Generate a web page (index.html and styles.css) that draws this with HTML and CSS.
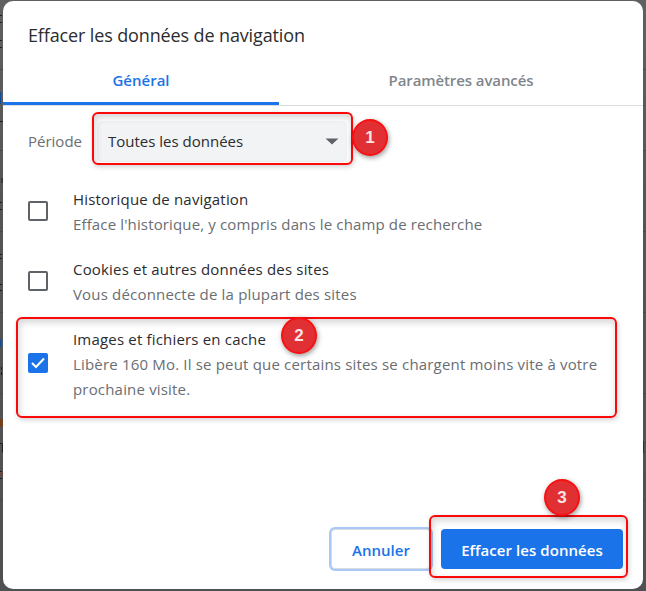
FILE: index.html
```html
<!DOCTYPE html>
<html lang="fr">
<head>
<meta charset="utf-8">
<title>Effacer les données de navigation</title>
<link rel="stylesheet" href="styles.css">
</head>
<body>
<svg class="backdrop" width="646" height="591" viewBox="0 0 646 591" aria-hidden="true">
  <path d="M0 69.500h3M0 150.500h3M0 231.500h646M0 312.500h3M0 393.500h646M643 69.500h3M643 150.500h3M643 312.500h3M0 500.500h646" stroke="#47484a"/>
  <path d="M0 15.500h2M0 22.500h2M0 40.500h2M0 47.500h2M0 121.500h3M2 178v5M0 202.500h2M0 209.500h2M0 254.500h2M0 258.500h2M0 284.500h2M0 290.500h2M1.500 367v3M1.500 372v3M0 443.500h2.500v9M0 471.500h2M0 478.500h2" fill="none" stroke="#1f2023"/>
  <path d="M0 92h1v12H0zM0 339h1v8H0z" fill="#164a91"/>
  <path d="M0 419h1v8H0zM2 419h1v8H2zM2 472h1v4H2z" fill="#713c1c"/>
  <path d="M643 441h1v12h-1z" fill="#26304d"/>
</svg>
<main class="dialog">
  <h1 class="title"><span>Effacer les données de navigation</span></h1>
  <nav class="tabs">
    <div class="tab active"><span>Général</span></div>
    <div class="tab advanced"><span>Paramètres avancés</span></div>
  </nav>
  <div class="period">
    <span class="period-label">Période</span>
    <div class="select"><span>Toutes les données</span>
      <svg width="14" height="7" viewBox="0 0 14 7"><path d="M.5.5h13L7 6.500z" fill="#5f6368"/></svg>
    </div>
  </div>
  <div class="option">
    <span class="box"></span>
    <div class="text"><p class="name">Historique de navigation</p><p class="desc short">Efface l'historique, y compris dans le champ de recherche</p></div>
  </div>
  <div class="option">
    <span class="box"></span>
    <div class="text"><p class="name">Cookies et autres données des sites</p><p class="desc">Vous déconnecte de la plupart des sites</p></div>
  </div>
  <div class="option tall">
    <span class="box checked"><svg width="20" height="20" viewBox="0 0 20 20"><path d="M4 10l4 4 8-8.500" fill="none" stroke="#fff" stroke-width="2"/></svg></span>
    <div class="text"><p class="name">Images et fichiers en cache</p><p class="desc">Libère 160 Mo. Il se peut que certains sites se chargent moins vite à votre</p><p class="desc">prochaine visite.</p></div>
  </div>
  <footer class="actions">
    <button class="cancel"><span>Annuler</span></button>
    <button class="confirm"><span>Effacer les données</span></button>
  </footer>
</main>
<div class="mark mark-1"></div>
<div class="mark mark-2"></div>
<div class="mark mark-3"></div>
<div class="badge badge-1">1</div>
<div class="badge badge-2">2</div>
<div class="badge badge-3">3</div>
</body>
</html>
```
FILE: styles.css
```css
* { box-sizing: border-box; }
body {
  margin: 0;
  width: 646px;
  height: 591px;
  padding: 1px 3px 2px;
  overflow: hidden;
  position: relative;
  background: linear-gradient(#606060, #545557 35%, #4f5052);
  font-family: "Open Sans", "Noto Sans", sans-serif;
  font-size: 15px;
  color: #2b2c2f;
}
span, p { white-space: nowrap; }
.backdrop { position: absolute; left: 0; top: 0; }
.dialog {
  position: relative;
  width: 640px;
  height: 588px;
  border-radius: 10px;
  background: #fff;
  display: flex;
  flex-direction: column;
}
.title {
  margin: 0;
  padding: 19px 25px 0;
  height: 55px;
  font-size: 18px;
  line-height: 30px;
  font-weight: 400;
  letter-spacing: -.13px;
}
.tabs {
  display: grid;
  grid-template-columns: 276px 1fr;
  height: 50px;
  border-bottom: 1px solid #dadce0;
}
.tab {
  display: flex;
  justify-content: center;
  height: 49px;
  line-height: 20px;
  padding-top: 14px;
  font-weight: 600;
  color: #80868b;
}
.tab.advanced { letter-spacing: -.1px; }
.tab.active {
  color: #1a73e8;
  border-bottom: 3px solid #1a73e8;
  border-top-right-radius: 2px;
}
.period {
  display: flex;
  align-items: center;
  height: 50px;
  margin-top: 10px;
  padding-left: 25px;
}
.period-label { color: #6a6e72; width: 69px; }
.select {
  display: flex;
  align-items: center;
  justify-content: space-between;
  width: 250px;
  height: 41px;
  padding: 0 8px 0 11px;
  border-radius: 5px;
  background: #f1f3f4;
}
.option {
  display: flex;
  align-items: center;
  gap: 25px;
  height: 70px;
  padding-left: 25px;
}
.period + .option { margin-top: 10px; }
.option.tall { height: 95px; margin-top: -1px; }
.option p { margin: 0; line-height: 25px; letter-spacing: .18px; }
.option .short { letter-spacing: .14px; }
.text { padding-top: 2px; }
.tall .text { padding-top: 4px; }
.box {
  width: 20px;
  height: 20px;
  flex: none;
  border: 2px solid #5f6368;
  border-radius: 2px;
}
.box.checked { border: 0; background: #1a73e8; }
.box svg { display: block; }
.desc { color: #6a6e72; }
.actions {
  display: flex;
  justify-content: flex-end;
  gap: 10px;
  margin-top: auto;
  padding: 0 20px 20px 0;
}
button {
  height: 40px;
  padding: 2px 0 0;
  border: 0;
  border-radius: 4px;
  font: 600 15px "Open Sans", "Noto Sans", sans-serif;
}
.cancel {
  width: 100px;
  background: #fff;
  color: #1a73e8;
  border: 1px solid #dadce0;
  box-shadow: 0 0 0 2px #a8c8f7;
}
.confirm { width: 182px; background: #1a73e8; color: #fff; letter-spacing: .06px; }
.mark {
  position: absolute;
  border: 2px solid #fb0909;
  border-radius: 6px;
  box-shadow: 1px 2px 5px rgba(0,0,0,.18), inset 1px 3px 6px 1px rgba(0,0,0,.15);
}
.mark-1 { left: 92px; top: 112px; width: 261px; height: 53px; }
.mark-2 { left: 16px; top: 317px; width: 601px; height: 101px; }
.mark-3 { left: 429px; top: 515px; width: 199px; height: 63px; }
.badge {
  position: absolute;
  width: 36px;
  height: 37px;
  border: 2px solid #fa1010;
  border-radius: 50%;
  background: #e13034;
  color: #f8e4e4;
  font: bold 17px/33px "Liberation Sans", sans-serif;
  text-align: center;
  box-shadow: 1px 2px 5px rgba(0,0,0,.4);
}
.badge-1 { left: 352px; top: 119px; }
.badge-2 { left: 281px; top: 317px; }
.badge-3 { left: 544px; top: 479px; }
```
